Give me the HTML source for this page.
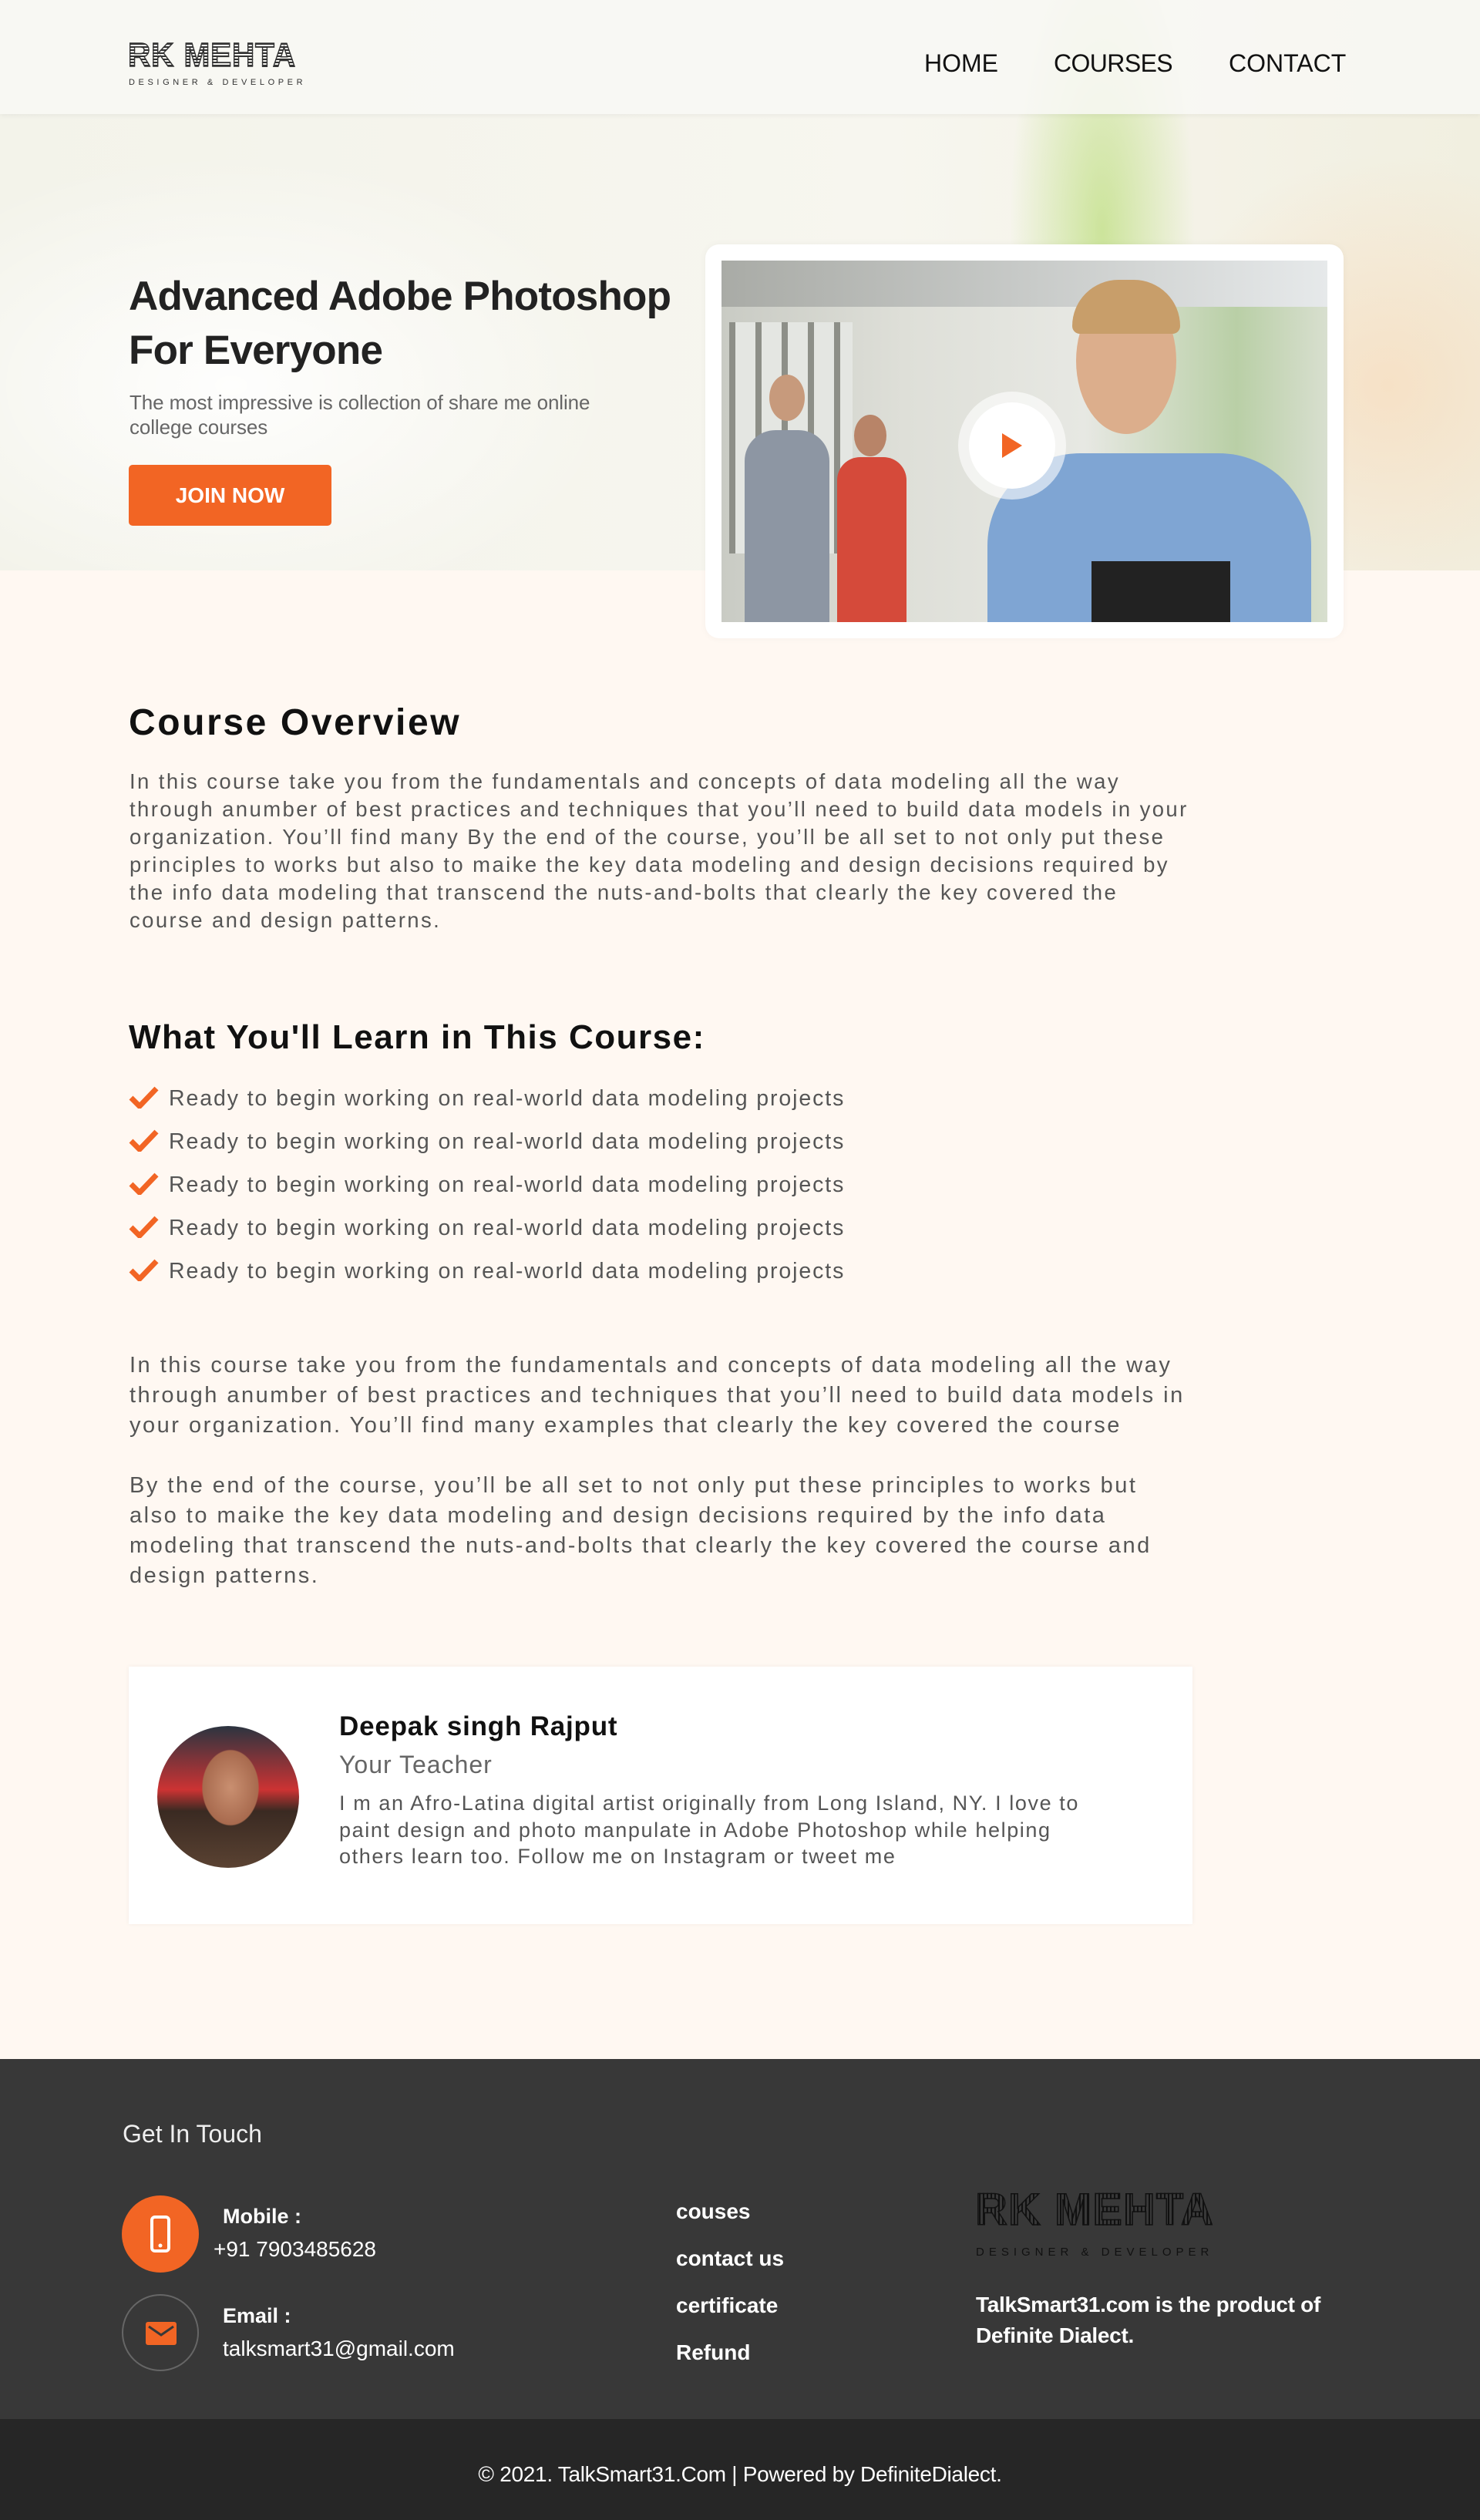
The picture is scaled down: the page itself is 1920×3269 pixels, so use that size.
<!DOCTYPE html>
<html><head><meta charset="utf-8"><style>
*{margin:0;padding:0;box-sizing:border-box}
body{width:1920px;height:3269px;font-family:"Liberation Sans",sans-serif;background:#fff8f2;position:relative;overflow:hidden}
.abs{position:absolute}
.hero{left:0;top:0;width:1920px;height:740px;background:
radial-gradient(ellipse 120px 400px at 1430px 300px,rgba(170,215,90,.55),transparent),
radial-gradient(ellipse 300px 300px at 1800px 500px,rgba(250,210,170,.5),transparent),
radial-gradient(ellipse 500px 300px at 300px 500px,rgba(255,255,255,.9),transparent),
linear-gradient(90deg,#f3f3ea,#f7f6ef 60%,#f1efe0);}
.header{left:0;top:0;width:1920px;height:148px;background:rgba(248,248,244,.85);box-shadow:0 2px 6px rgba(0,0,0,.05)}
.logo{font-family:"Liberation Sans",sans-serif;font-weight:bold;letter-spacing:1px;color:transparent;background:repeating-linear-gradient(0deg,#333 0 2px,transparent 2px 4px);-webkit-background-clip:text;background-clip:text;-webkit-text-stroke:1.5px #333}
.sub{font-size:11px;letter-spacing:4.6px;color:#333}
.nav{font-size:32px;color:#111;top:66px}
p,div{line-height:1}
</style></head><body>
<div class="abs hero"></div>
<div class="abs header"></div>
<div class="abs logo" style="left:166px;top:50px;font-size:44px;transform:scaleX(.92);transform-origin:left">RK MEHTA</div>
<div class="abs sub" style="left:167px;top:102px">DESIGNER &amp; DEVELOPER</div>
<div class="abs nav" style="left:1199px">HOME</div>
<div class="abs nav" style="left:1367px;letter-spacing:-.6px">COURSES</div>
<div class="abs nav" style="left:1594px">CONTACT</div>

<div class="abs" style="left:167px;top:350px;font-size:53px;font-weight:bold;color:#222;line-height:70px;letter-spacing:-0.8px">Advanced Adobe Photoshop<br>For Everyone</div>
<div class="abs" style="left:168px;top:506px;font-size:26px;color:#666;line-height:32px;letter-spacing:-0.1px">The most impressive is collection of share me online<br>college courses</div>
<div class="abs" style="left:167px;top:603px;width:263px;height:79px;background:#f26524;border-radius:5px;color:#fff;font-size:28px;font-weight:bold;text-align:center;line-height:79px">JOIN NOW</div>

<div class="abs" style="left:915px;top:317px;width:828px;height:511px;background:#fff;border-radius:18px;box-shadow:0 0 10px rgba(0,0,0,.04)"></div>
<div class="abs" style="left:936px;top:338px;width:786px;height:469px;overflow:hidden;background:linear-gradient(90deg,#c9cbc4,#dedfd8 30%,#e7e8e3 60%,#b9cfa6 85%,#d8dfcf)">
 <div class="abs" style="left:0;top:0;width:786px;height:60px;background:linear-gradient(90deg,#a9aba6,#e6e9ea)"></div>
 <div class="abs" style="left:10px;top:80px;width:160px;height:300px;background:repeating-linear-gradient(90deg,#8d8f88 0 8px,#e4e6e2 8px 34px)"></div>
 <div class="abs" style="left:30px;top:220px;width:110px;height:260px;background:#8d96a3;border-radius:40px 40px 0 0"></div>
 <div class="abs" style="left:62px;top:148px;width:46px;height:60px;background:#c79a7c;border-radius:50%"></div>
 <div class="abs" style="left:150px;top:255px;width:90px;height:220px;background:#d54a3a;border-radius:30px 30px 0 0"></div>
 <div class="abs" style="left:172px;top:200px;width:42px;height:54px;background:#b88468;border-radius:50%"></div>
 <div class="abs" style="left:345px;top:250px;width:420px;height:230px;background:#7fa5d3;border-radius:120px 120px 0 0"></div>
 <div class="abs" style="left:460px;top:35px;width:130px;height:190px;background:#dcae8c;border-radius:50%"></div>
 <div class="abs" style="left:455px;top:25px;width:140px;height:70px;background:#c89e6a;border-radius:60px 60px 10px 10px"></div>
 <div class="abs" style="left:480px;top:390px;width:180px;height:90px;background:#222"></div>
</div>
<div class="abs" style="left:1243px;top:508px;width:140px;height:140px;border-radius:50%;background:rgba(255,255,255,.6)"></div>
<div class="abs" style="left:1257px;top:522px;width:112px;height:112px;border-radius:50%;background:#fff"></div>
<svg class="abs" style="left:1298px;top:560px" width="30" height="36"><path d="M2 2 L28 18 L2 34Z" fill="#f26524"/></svg>

<div class="abs" style="left:167px;top:914px;font-size:48px;font-weight:bold;color:#111;letter-spacing:2.6px">Course Overview</div>
<div class="abs" style="left:168px;top:996px;width:1500px;font-size:27.5px;color:#555;line-height:36px;letter-spacing:2.4px">In this course take you from the fundamentals and concepts of data modeling all the way<br>through anumber of best practices and techniques that you’ll need to build data models in your<br>organization. You’ll find many By the end of the course, you’ll be all set to not only put these<br>principles to works but also to maike the key data modeling and design decisions required by<br>the info data modeling that transcend the nuts-and-bolts that clearly the key covered the<br>course and design patterns.</div>

<div class="abs" style="left:167px;top:1324px;font-size:44px;font-weight:bold;color:#111;letter-spacing:1.5px">What You'll Learn in This Course:</div>
<div class="abs" style="left:167px;top:1408px;font-size:28.5px;color:#555;letter-spacing:1.9px;line-height:56px">
<div>
<div style="height:56px"><svg width="40" height="30" style="vertical-align:-4px;margin-right:12px"><path d="M3 16 L14 27 L36 4" stroke="#f26524" stroke-width="7" fill="none"/></svg>Ready to begin working on real-world data modeling projects</div>
<div style="height:56px"><svg width="40" height="30" style="vertical-align:-4px;margin-right:12px"><path d="M3 16 L14 27 L36 4" stroke="#f26524" stroke-width="7" fill="none"/></svg>Ready to begin working on real-world data modeling projects</div>
<div style="height:56px"><svg width="40" height="30" style="vertical-align:-4px;margin-right:12px"><path d="M3 16 L14 27 L36 4" stroke="#f26524" stroke-width="7" fill="none"/></svg>Ready to begin working on real-world data modeling projects</div>
<div style="height:56px"><svg width="40" height="30" style="vertical-align:-4px;margin-right:12px"><path d="M3 16 L14 27 L36 4" stroke="#f26524" stroke-width="7" fill="none"/></svg>Ready to begin working on real-world data modeling projects</div>
<div style="height:56px"><svg width="40" height="30" style="vertical-align:-4px;margin-right:12px"><path d="M3 16 L14 27 L36 4" stroke="#f26524" stroke-width="7" fill="none"/></svg>Ready to begin working on real-world data modeling projects</div>
</div></div>

<div class="abs" style="left:168px;top:1752px;width:1600px;font-size:29px;color:#555;line-height:39px;letter-spacing:2.5px">In this course take you from the fundamentals and concepts of data modeling all the way<br>through anumber of best practices and techniques that you’ll need to build data models in<br>your organization. You’ll find many examples that clearly the key covered the course<br><br>By the end of the course, you’ll be all set to not only put these principles to works but<br>also to maike the key data modeling and design decisions required by the info data<br>modeling that transcend the nuts-and-bolts that clearly the key covered the course and<br>design patterns.</div>

<div class="abs" style="left:167px;top:2162px;width:1380px;height:334px;background:#fff;box-shadow:0 0 6px rgba(0,0,0,.05)"></div>
<div class="abs" style="left:204px;top:2239px;width:184px;height:184px;border-radius:50%;overflow:hidden;background:radial-gradient(ellipse 60px 80px at 95px 80px,#c98f70,#a86a4e 60%,transparent 62%),linear-gradient(180deg,#2b3440,#c33 45%,#3a2a22 60%,#5a4232)"></div>
<div class="abs" style="left:440px;top:2222px;font-size:35px;font-weight:bold;color:#111;letter-spacing:.8px">Deepak singh Rajput</div>
<div class="abs" style="left:440px;top:2273px;font-size:32px;color:#666;letter-spacing:1px">Your Teacher</div>
<div class="abs" style="left:440px;top:2322px;font-size:27px;color:#555;line-height:34.5px;letter-spacing:1.6px">I m an Afro-Latina digital artist originally from Long Island, NY. I love to<br>paint design and photo manpulate in Adobe Photoshop while helping<br>others learn too. Follow me on Instagram or tweet me</div>

<div class="abs" style="left:0;top:2671px;width:1920px;height:467px;background:#383838"></div>
<div class="abs" style="left:0;top:3138px;width:1920px;height:131px;background:#262626"></div>
<div class="abs" style="left:159px;top:2752px;font-size:32px;color:#eee">Get In Touch</div>
<div class="abs" style="left:158px;top:2848px;width:100px;height:100px;border-radius:50%;background:#f26524"></div>
<svg class="abs" style="left:194px;top:2874px" width="28" height="48"><rect x="3" y="2" width="22" height="44" rx="4" fill="none" stroke="#fff" stroke-width="4"/><circle cx="14" cy="39" r="2.5" fill="#fff"/></svg>
<div class="abs" style="left:158px;top:2976px;width:100px;height:100px;border-radius:50%;border:2px solid #666"></div>
<svg class="abs" style="left:189px;top:3012px" width="40" height="30"><rect x="0" y="0" width="40" height="30" rx="3" fill="#f26524"/><path d="M4 6 L20 17 L36 6" stroke="#383838" stroke-width="3" fill="none"/></svg>
<div class="abs" style="left:289px;top:2862px;font-size:27px;font-weight:bold;color:#fff">Mobile :</div>
<div class="abs" style="left:277px;top:2904px;font-size:28px;color:#fff">+91 7903485628</div>
<div class="abs" style="left:289px;top:2991px;font-size:27px;font-weight:bold;color:#fff">Email :</div>
<div class="abs" style="left:289px;top:3033px;font-size:28px;color:#fff">talksmart31@gmail.com</div>
<div class="abs" style="left:877px;top:2838px;font-size:28px;font-weight:bold;color:#fff;line-height:61px">couses<br>contact us<br>certificate<br>Refund</div>
<div class="abs logo" style="left:1265px;top:2838px;font-size:58px;-webkit-text-stroke:1.5px #111;background:repeating-linear-gradient(90deg,#111 0 2px,transparent 2px 5px);-webkit-background-clip:text;background-clip:text">RK MEHTA</div>
<div class="abs sub" style="left:1266px;top:2914px;font-size:15px;letter-spacing:6px;color:#111">DESIGNER &amp; DEVELOPER</div>
<div class="abs" style="left:1266px;top:2970px;font-size:28px;font-weight:bold;color:#fff;line-height:40px;letter-spacing:-.3px">TalkSmart31.com is the product of<br>Definite Dialect.</div>
<div class="abs" style="left:0;top:3196px;width:1920px;text-align:center;font-size:28px;color:#fff;letter-spacing:-.3px">© 2021. TalkSmart31.Com | Powered by DefiniteDialect.</div>
</body></html>
